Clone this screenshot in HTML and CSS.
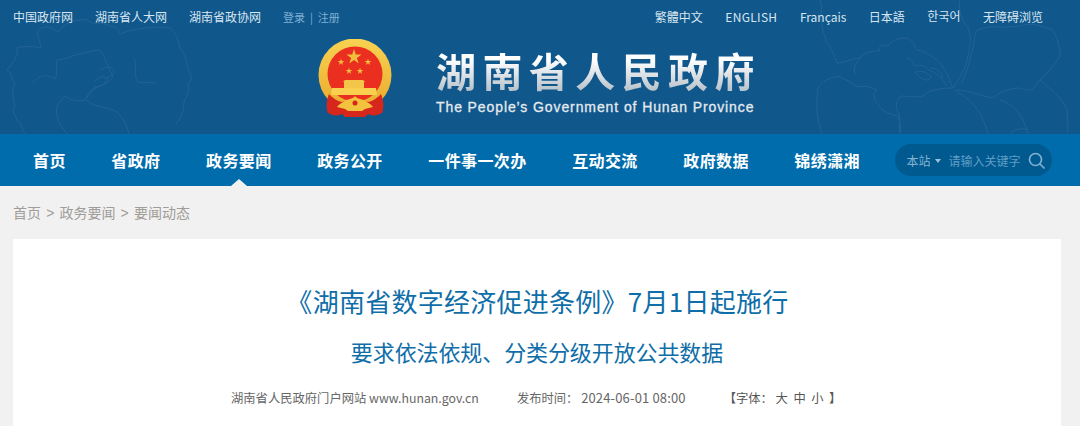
FILE: index.html
```html
<!DOCTYPE html>
<html>
<head>
  <meta charset="utf-8">
  <title>《湖南省数字经济促进条例》7月1日起施行</title>
  <link rel="stylesheet" href="styles.css">
</head>
<body>
  <div class="header">
    <svg class="flowers" width="1080" height="134" viewBox="0 0 1080 134" fill="none" stroke="#236396" stroke-width="1">
      <!-- left flower -->
      <path d="M38 30c8-6 14-2 20 2 6-8 14-12 22-12 6-2 10 2 14 4 6-2 12 0 19 3 6 0 5 4 7 7 14-6 34-8 50-6 6 4 8 12 10 20 6 6 6 14 8 20 2 6 6 10 0 16 2 8-2 12-4 18 0 8-2 14-8 22"/>
      <path d="M38 30c-2 8 4 12 2 18-8-2-18-2-23 0 2 8-4 14-10 22 6 4 4 10 8 14-4 8-2 14 0 22-4 6 0 8 2 14 6 4 4 8 8 14"/>
      <path d="M33 83c8-10 16-8 22-4 4-8 0-14 2-19 10 0 16-6 24-6 6-2 14-4 19-4 6 8 8 18 13 27-4 6-10 8-16 10"/>
      <path d="M97 87c-6 2-10 8-12 13-8 2-14 0-20-4-6 6-10 10-8 18 0 8 6 14 10 20M87 100c6 8 20 6 30 12 6 6 10 14 12 22"/>
      <path d="M100 70c6-4 14-4 14 2-2 4-6 6-10 6M94 82c4-6 10-6 14-4-2 6-8 10-14 8M85 100c4-6 8-10 12-13"/>
      <path d="M134 58c4 10-2 14 4 24 8 2 14-2 18 2"/>
      <!-- right flower -->
      <path d="M820 0c4 8-2 16 2 24 0 8 4 12 4 18 6 6 8 14 11 21 8 0 16-5 23-5-4 6-8 10-4 16"/>
      <path d="M818 88c2-6 14-12 22-11 6 2 12 6 17 10 8-2 14 0 20 3-6 4-2 10 2 16 4 6 12 8 18 10 4 6 4 12 3 17"/>
      <path d="M860 58c2-6 12-6 20-8-2-4 2-6 8-4 4-6 10-8 19-8 6 2 8 8 10 12 10 2 18 8 24 14 6 8 8 16 12 24"/>
      <path d="M818 88c-2 14-2 28 4 46M953 88c-14 0-24 2-30 8-8 2-14 0-22 0-6 6-6 12-2 18 2 8-2 14 2 20"/>
      <path d="M907 58c4 0 6 4 8 8 6-2 10 0 14 4 6 2 12 6 18 16M915 72c6-2 14 0 16 6-4 4-10 2-16-6M931 68c6 0 10 4 12 10"/>
      <path d="M960 0c-2 12 2 20 8 28 4 8 2 18 0 28-2 12-8 22-15 32"/>
      <path d="M977 30c-4 8-2 14-6 24-2 12-6 22-10 30M977 30c8-2 12-4 23-3 6 0 14 0 20-1 10-4 22 0 33 4 4 8 8 18 7 27-6 8-12 16-20 23 8 8 22 16 27 30 0 8 2 16 0 23"/>
      <path d="M955 90c14 0 26 6 38 8 6-6 18-10 26-10 8 2 14 6 20-8M958 92c12 8 24 18 30 42M1000 100c12 4 22 12 28 34"/>
      <path d="M1010 134c6-6 12-6 18-4"/>
    </svg>
    <div class="topbar">
      <div class="topleft">
        <a>中国政府网</a>
        <a>湖南省人大网</a>
        <a>湖南省政协网</a>
        <span class="login">登录&nbsp;&nbsp;|&nbsp;&nbsp;注册</span>
      </div>
      <div class="topright">
        <a>繁體中文</a>
        <a class="eng">ENGLISH</a>
        <a>Français</a>
        <a>日本語</a>
        <a class="kr">한국어</a>
        <a>无障碍浏览</a>
      </div>
    </div>
    <div class="logo">
      <svg class="emblem" width="74" height="82" viewBox="0 0 74 82">
        <defs>
          <linearGradient id="gold" x1="0" y1="0" x2="0" y2="1">
            <stop offset="0" stop-color="#f8d252"/>
            <stop offset="1" stop-color="#e9a92c"/>
          </linearGradient>
          <polygon id="star" points="0,-1 .225,-.31 .95,-.31 .36,.12 .59,.81 0,.38 -.59,.81 -.36,.12 -.95,-.31 -.225,-.31"/>
        </defs>
        <circle cx="37" cy="36" r="36.5" fill="url(#gold)"/>
        <circle cx="37" cy="35" r="27.5" fill="#ea2f20"/>
        <g fill="#f0bd3c">
          <use href="#star" transform="translate(36 18) scale(8)"/>
          <use href="#star" transform="translate(23 23) scale(3.6)"/>
          <use href="#star" transform="translate(50 23) scale(3.6)"/>
          <use href="#star" transform="translate(31 32) scale(3.6)"/>
          <use href="#star" transform="translate(42 32) scale(3.6)"/>
        </g>
        <path d="M27 41h18l2 2h-1v6H26v-6h-1z" fill="#f3c64a"/>
        <path d="M14 49h44l1 7H13z" fill="#f8cf4e"/>
        <path d="M11 55C8 62 8 70 10 74c5 3 10 3 14 1l3 3h20l3-3c4 2 9 2 14-1 2-4 2-12-1-19-3 3-7 7-13 8l-13-3-13 3c-6-1-10-5-13-8z" fill="#d7261c"/>
        <path d="M37 57c2 3 6 3 9 4 4 3 7 4 9 7l-8 2-3 2H30l-3-2-8-2c2-3 5-4 9-7 3-1 7-1 9-4z" fill="#f3c23f"/>
        <circle cx="37" cy="64" r="2.5" fill="#d7261c"/>
      </svg>
      <div class="logotext">
        <div class="cn">湖南省人民政府</div>
        <div class="en">The People’s Government of Hunan Province</div>
      </div>
    </div>
  </div>
  <div class="nav">
    <a>首页</a>
    <a>省政府</a>
    <a class="on">政务要闻</a>
    <a>政务公开</a>
    <a>一件事一次办</a>
    <a>互动交流</a>
    <a>政府数据</a>
    <a>锦绣潇湘</a>
    <div class="search">
      <span class="range">本站</span>
      <span class="arrow"></span>
      <span class="hint">请输入关键字</span>
      <svg width="17" height="17" viewBox="0 0 17 17" fill="none" stroke="#7fb0cf" stroke-width="1.7">
        <circle cx="7.5" cy="7.5" r="6"/>
        <path d="M12 12l4 4" stroke-linecap="round"/>
      </svg>
    </div>
  </div>
  <div class="crumb">首页 <i>&gt;</i> 政务要闻 <i>&gt;</i> 要闻动态</div>
  <div class="card">
    <h1>《湖南省数字经济促进条例》7月1日起施行</h1>
    <h2>要求依法依规、分类分级开放公共数据</h2>
    <div class="meta">
      <span>湖南省人民政府门户网站 www.hunan.gov.cn</span>
      <span>发布时间：&nbsp;<b>2024-06-01 08:00</b></span>
      <span class="size">【字体： 大 &nbsp;中 &nbsp;小 &nbsp;】</span>
    </div>
  </div>
</body>
</html>
```

FILE: styles.css
```css
html, body {
  margin: 0;
  padding: 0;
}
body {
  width: 1080px;
  height: 426px;
  overflow: hidden;
  background-color: #f1f1f1;
  font-family: "Noto Sans CJK SC", "Noto Sans", sans-serif;
}
a {
  color: inherit;
  text-decoration: none;
}
.header {
  position: relative;
  height: 134px;
  background-color: #10578c;
}
.flowers {
  position: absolute;
  top: 0;
  left: 0;
}
.topbar {
  position: relative;
  display: flex;
  justify-content: space-between;
  height: 34px;
  padding: 0 37px 0 13px;
  font-size: 12px;
  line-height: 34px;
  color: #d8e6f0;
}
.topleft {
  display: flex;
  gap: 22px;
}
.login {
  color: #7fb0d3;
  font-size: 11px;
}
.topright {
  display: flex;
  gap: 22.5px;
}
.eng {
  letter-spacing: .3px;
}
.kr {
  position: relative;
  top: -1px;
}
.logo {
  position: relative;
  display: flex;
  padding: 5px 0 0 318px;
}
.emblem {
  display: block;
}
.logotext {
  margin-left: 44px;
}
.cn {
  font-size: 40px;
  font-weight: 700;
  line-height: 50px;
  margin-top: 6px;
  letter-spacing: 6.4px;
  white-space: nowrap;
  color: transparent;
  background: linear-gradient(#ffffff 30%, #b9c4cc 90%);
  -webkit-background-clip: text;
  background-clip: text;
}
.en {
  font-family: "Liberation Sans", sans-serif;
  font-size: 14px;
  line-height: 16px;
  margin-top: 4px;
  letter-spacing: .9px;
  white-space: nowrap;
  color: #e4eaee;
  -webkit-text-stroke: .3px #e4eaee;
}
.nav {
  display: flex;
  align-items: center;
  gap: 45.5px;
  height: 52px;
  padding-left: 33px;
  background-color: #006cab;
  color: #fff;
  font-size: 16px;
  font-weight: 700;
  letter-spacing: .4px;
}
.nav a {
  position: relative;
  line-height: 52px;
  white-space: nowrap;
}
.nav a.on:after {
  content: "";
  position: absolute;
  left: 50%;
  bottom: 0;
  margin-left: -8px;
  border-left: 8px solid transparent;
  border-right: 8px solid transparent;
  border-bottom: 7px solid #f1f1f1;
}
.search {
  display: flex;
  align-items: center;
  width: 146px;
  height: 32px;
  margin-left: -10px;
  padding-left: 11px;
  border-radius: 16px;
  background-color: #005a8f;
  color: #86b4d2;
  font-size: 12px;
  font-weight: 400;
  letter-spacing: 0;
}
.arrow {
  margin: 1px 7px 0 5px;
  border-left: 3px solid transparent;
  border-right: 3px solid transparent;
  border-top: 4px solid #9cc2da;
}
.hint {
  margin-right: 7px;
  white-space: nowrap;
  color: #5f9dc5;
}
.crumb {
  padding-left: 13px;
  height: 53px;
  font-size: 14px;
  line-height: 52px;
  color: #a09c98;
}
.crumb i {
  font-style: normal;
  font-family: "Liberation Sans", sans-serif;
  margin: 0 2px;
}
.card {
  margin: 0 19px 0 13px;
  height: 200px;
  background-color: #fff;
  text-align: center;
  color: #666;
}
h1 {
  margin: 0;
  padding: 44px 0 0 1px;
  font-size: 26px;
  font-weight: 400;
  line-height: 36px;
  letter-spacing: .27px;
  color: #0f6ea8;
}
h2 {
  margin: 0;
  padding: 16px 0 0;
  font-size: 22px;
  font-weight: 400;
  line-height: 32px;
  letter-spacing: -.1px;
  color: #0f6ea8;
}
.meta {
  display: flex;
  gap: 38px;
  padding: 21px 0 0 218px;
  font-size: 12.3px;
  line-height: 20px;
  white-space: nowrap;
}
.meta b {
  font-size: 13px;
  font-weight: 400;
  letter-spacing: .15px;
}
.meta .size {
  color: #555;
}
```
